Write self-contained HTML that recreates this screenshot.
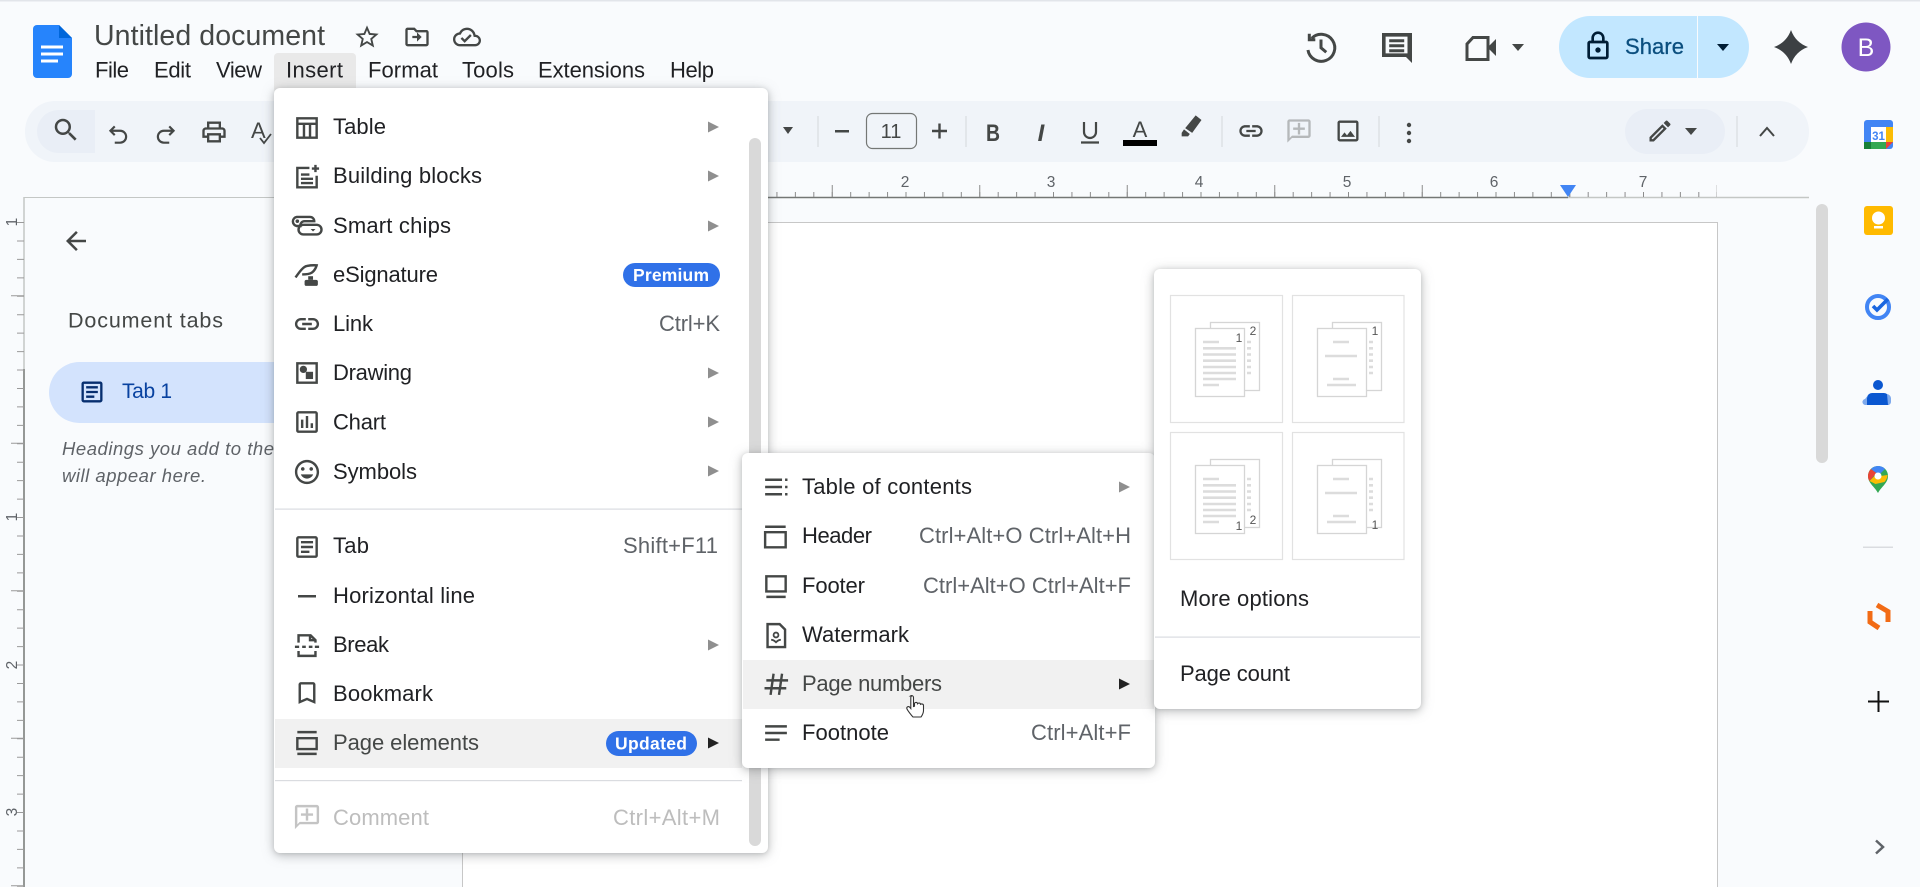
<!DOCTYPE html>
<html lang="en"><head><meta charset="utf-8"><title>Untitled document</title>
<style>
html,body{margin:0;padding:0;background:#f9fbfd;width:1920px;height:887px;overflow:hidden}
svg.r{display:block;position:absolute;left:0;top:0}
text{font-family:"Liberation Sans",sans-serif;white-space:pre}
.m{font-size:22px;fill:#202124}
.k{font-size:22px;fill:#5f6368}
.d{font-size:22px;fill:#bdbdbd}
.h{font-size:22px;fill:#202124}
.n{font-size:15.500px;fill:#5f6368;text-anchor:middle}
.b{font-size:17.500px;font-weight:700;fill:#fff}
.g{fill:#444746}
.s{fill:none;stroke:#444746;stroke-width:2}
.shadow{filter:drop-shadow(0 2px 6px rgba(60,64,67,.28)) drop-shadow(0 1px 2px rgba(60,64,67,.2))}
</style></head><body>
<svg class="r" width="1920" height="887" viewBox="0 0 1920 887" xmlns="http://www.w3.org/2000/svg">
<defs>
<g id="pgs">
<rect x="1210.5" y="322.5" width="49" height="68" fill="#fff" stroke="#d5d5d5" stroke-width="1.3"/>
<rect x="1195.5" y="328.5" width="49" height="68" fill="#fff" stroke="#d5d5d5" stroke-width="1.3"/>
<path d="M1247 342h4M1247 348.300h4M1247 354.500h4M1247 360.700h4M1247 367h4M1247 373h4" stroke="#dcdcdc" stroke-width="2.600"/>
</g>
<path id="l1" d="M1203 342h16M1203 348.300h33M1203 354.500h33M1203 360.700h33M1203 367h33M1203 373h33M1203 379h33M1203 385h16" stroke="#dcdcdc" stroke-width="2.600"/>
<path id="l2" d="M1333 342h16M1325 356h32M1333 379h16M1327 385h29" stroke="#dcdcdc" stroke-width="2.600"/>
</defs>

<rect width="1920" height="887" fill="#f9fbfd"/>
<rect width="1920" height="1.500" fill="#e2e5ea"/>

<!-- page -->
<rect x="462.500" y="222.500" width="1255" height="700" fill="#fff" stroke="#c7c7c7"/>
<!-- rulers -->
<line x1="24" y1="197.500" x2="1568" y2="197.500" stroke="#c4c7c5"/>
<line x1="760" y1="197.500" x2="1568" y2="197.500" stroke="#747775" stroke-width="1.500"/>
<line x1="1568" y1="197.500" x2="1809" y2="197.500" stroke="#c4c7c5" stroke-width="1.500"/>
<line x1="758" y1="194.500" x2="1717" y2="194.500" stroke="#8c8c8c" stroke-width="5" stroke-dasharray="1 17.4375"/>
<line x1="831.750" y1="191" x2="1717" y2="191" stroke="#8c8c8c" stroke-width="12" stroke-dasharray="1 146.500"/>
<text class="n" x="905" y="187">2</text><text class="n" x="1051" y="187">3</text><text class="n" x="1199" y="187">4</text><text class="n" x="1347" y="187">5</text><text class="n" x="1494" y="187">6</text><text class="n" x="1643" y="187">7</text>
<polygon points="1560,185 1576,185 1568,197" fill="#4285f4"/>
<line x1="24" y1="197" x2="24" y2="369" stroke="#c4c7c5" stroke-width="1.500"/>
<line x1="24" y1="369" x2="24" y2="887" stroke="#747775" stroke-width="1.500"/>
<line x1="20.500" y1="222" x2="20.500" y2="887" stroke="#9a9a9a" stroke-width="7" stroke-dasharray="1 17.4375"/>
<line x1="17.500" y1="295.250" x2="17.500" y2="887" stroke="#9a9a9a" stroke-width="13" stroke-dasharray="1 146.500"/>
<g class="n"><text class="n" transform="translate(12 222) rotate(-90)" y="5">1</text><text class="n" transform="translate(12 517) rotate(-90)" y="5">1</text><text class="n" transform="translate(12 665) rotate(-90)" y="5">2</text><text class="n" transform="translate(12 812) rotate(-90)" y="5">3</text></g>

<!-- sidebar -->
<svg x="61" y="226" width="30" height="30" viewBox="0 0 24 24"><path class="g" d="M20 11H7.830l5.590-5.590L12 4l-8 8 8 8 1.410-1.410L7.830 13H20v-2z"/></svg>
<text x="68" y="327.500" font-size="21.500" fill="#444746" textLength="155" lengthAdjust="spacing">Document tabs</text>
<rect x="49" y="362" width="300" height="61" rx="30.500" fill="#d3e3fd"/>
<svg x="78" y="378" width="28" height="28" viewBox="0 0 24 24"><path fill="#062e6f" d="M19 5v14H5V5h14m0-2H5c-1.100 0-2 .9-2 2v14c0 1.100.9 2 2 2h14c1.100 0 2-.9 2-2V5c0-1.100-.9-2-2-2z M14 17H7v-2h7v2zm3-4H7v-2h10v2zm0-4H7V7h10v2z"/></svg>
<text x="122" y="398" font-size="21" fill="#0842a0" textLength="50" lengthAdjust="spacing">Tab 1</text>
<text x="62" y="455" font-size="18.500" font-style="italic" fill="#5f6368" textLength="212" lengthAdjust="spacing">Headings you add to the</text>
<text x="62" y="482" font-size="18.500" font-style="italic" fill="#5f6368" textLength="144" lengthAdjust="spacing">will appear here.</text>

<!-- toolbar -->
<rect x="25" y="101" width="1784" height="61" rx="30" fill="#f0f4f9"/>
<path d="M58 110H95V153H58A21.500 21.500 0 0 1 37 131.500A21.500 21.500 0 0 1 58 110Z" fill="#e9eef6"/>
<svg x="51" y="115" width="30" height="30" viewBox="0 0 24 24"><path class="g" d="M15.500 14h-.79l-.28-.27A6.471 6.471 0 0 0 16 9.500 6.500 6.500 0 1 0 9.500 16c1.610 0 3.090-.59 4.230-1.570l.27.28v.79l5 4.990L20.490 19l-4.990-5zm-6 0C7.010 14 5 11.990 5 9.500S7.010 5 9.500 5 14 7.010 14 9.500 11.990 14 9.500 14z"/></svg>
<svg x="105" y="121" width="26" height="26" viewBox="0 0 24 24"><path class="s" d="M9 5L5 9l4 4M5 9h9a5.500 5.500 0 0 1 0 11H9"/></svg>
<svg x="153" y="121" width="26" height="26" viewBox="0 0 24 24"><path class="s" d="M15 5l4 4-4 4M19 9h-9a5.500 5.500 0 0 0 0 11h5"/></svg>
<svg x="200" y="118" width="28" height="28" viewBox="0 0 24 24"><path class="g" d="M19 8h-1V3H6v5H5c-1.660 0-3 1.340-3 3v6h4v4h12v-4h4v-6c0-1.660-1.340-3-3-3zM8 5h8v3H8V5zm8 12v2H8v-4h8v2zm2-2v-2H6v2H4v-4c0-.55.45-1 1-1h14c.55 0 1 .45 1 1v4h-2z"/></svg>
<text x="251" y="138" font-size="22" fill="#444746">A</text>
<path d="M260 138l4 5 7-9" fill="none" stroke="#444746" stroke-width="1.800"/>
<polygon points="783,127 793,127 788,134" fill="#444746"/>
<g stroke="#d5d8dc"><line x1="818" y1="116" x2="818" y2="147"/><line x1="966" y1="116" x2="966" y2="147"/><line x1="1222" y1="116" x2="1222" y2="147"/><line x1="1379" y1="116" x2="1379" y2="147"/><line x1="1737" y1="116" x2="1737" y2="147"/></g>
<rect x="835" y="130" width="14" height="2.500" fill="#444746"/>
<rect x="866.500" y="113.500" width="50" height="35" rx="6" fill="none" stroke="#747775" stroke-width="1.200"/>
<text x="891" y="138" font-size="20" fill="#444746" text-anchor="middle">11</text>
<path d="M932 131h15M939.500 123.500v15" stroke="#444746" stroke-width="2.400"/>
<text x="993" y="141" font-size="24" font-weight="700" fill="#444746" text-anchor="middle" textLength="14" lengthAdjust="spacingAndGlyphs">B</text>
<text x="1041" y="141" font-size="24" font-weight="700" font-style="italic" fill="#444746" text-anchor="middle" font-family="Liberation Serif">I</text>
<path d="M1084 122v10a6 6 0 0 0 12 0v-10M1081 142.500h18" fill="none" stroke="#444746" stroke-width="2.200"/>
<text x="1140" y="137" font-size="22" fill="#444746" text-anchor="middle">A</text>
<rect x="1123" y="140" width="34" height="6" fill="#000"/>
<svg x="1177" y="112" width="28" height="30" viewBox="0 0 24 24"><path class="g" d="M16 2l5 4-8 11-6-4zM6 14l5 4-1.500 2H4v-3z"/></svg>
<svg x="1237" y="117" width="28" height="28" viewBox="0 0 24 24"><path class="g" d="M17 7h-4v2h4c1.650 0 3 1.350 3 3s-1.350 3-3 3h-4v2h4c2.760 0 5-2.240 5-5s-2.240-5-5-5zm-6 8H7c-1.650 0-3-1.350-3-3s1.350-3 3-3h4V7H7c-2.760 0-5 2.240-5 5s2.240 5 5 5h4v-2zm-3-4h8v2H8z"/></svg>
<svg x="1285" y="117" width="28" height="28" viewBox="0 0 24 24"><path fill="#b5b8ba" d="M20 2H4c-1.100 0-2 .9-2 2v18l4-4h14c1.100 0 2-.9 2-2V4c0-1.100-.9-2-2-2zm0 14H6l-2 2V4h16v12zM13 5h-2v4H7v2h4v4h2v-4h4V9h-4z"/></svg>
<svg x="1334" y="117" width="28" height="28" viewBox="0 0 24 24"><path class="g" d="M19 5v14H5V5h14m0-2H5c-1.100 0-2 .9-2 2v14c0 1.100.9 2 2 2h14c1.100 0 2-.9 2-2V5c0-1.100-.9-2-2-2zm-4.860 8.860l-3 3.870L9 13.140 6 17h12l-3.860-5.140z"/></svg>
<g fill="#444746"><circle cx="1409" cy="125" r="2.200"/><circle cx="1409" cy="133" r="2.200"/><circle cx="1409" cy="141" r="2.200"/></g>
<rect x="1625" y="109" width="100" height="45" rx="22.500" fill="#e9eef6"/>
<svg x="1646" y="117" width="28" height="28" viewBox="0 0 24 24"><path class="g" d="M14.060 9.020l.92.92L5.920 19H5v-.92l9.060-9.060M17.660 3c-.25 0-.51.1-.7.29l-1.830 1.830 3.750 3.750 1.830-1.830c.39-.39.39-1.020 0-1.410l-2.340-2.340c-.2-.2-.45-.29-.71-.29zm-3.600 3.190L3 17.250V21h3.750L17.810 9.940l-3.750-3.750z"/></svg>
<polygon points="1685,128 1697,128 1691,135" fill="#444746"/>
<path d="M1760 136l7-8 7 8" fill="none" stroke="#444746" stroke-width="2"/>

<!-- header -->
<path d="M37 25H59L72 38V74a4 4 0 0 1-4 4H37a4 4 0 0 1-4-4V29a4 4 0 0 1 4-4Z" fill="#2684fc"/>
<path d="M59 25L72 38H59Z" fill="#0066da"/>
<path d="M41 47h22M41 54h22M41 61h17" stroke="#fff" stroke-width="3"/>
<text x="94" y="45" font-size="28.500" fill="#444746" textLength="231" lengthAdjust="spacing">Untitled document</text>
<svg x="353" y="23" width="28" height="28" viewBox="0 0 24 24"><path class="g" d="M22 9.240l-7.190-.62L12 2 9.190 8.630 2 9.240l5.460 4.730L5.820 21 12 17.270 18.180 21l-1.630-7.030L22 9.240zM12 15.400l-3.760 2.270 1-4.280-3.320-2.880 4.380-.38L12 6.100l1.710 4.040 4.380.38-3.320 2.880 1 4.280L12 15.400z"/></svg>
<svg x="403" y="23" width="28" height="28" viewBox="0 0 24 24"><path class="g" d="M20 6h-8l-2-2H4c-1.100 0-2 .9-2 2v12c0 1.100.9 2 2 2h16c1.100 0 2-.9 2-2V8c0-1.100-.9-2-2-2zm0 12H4V6h5.170l2 2H20v10zm-8-2l4-4-4-4v3H8v2h4v3z"/></svg>
<svg x="452" y="23" width="30" height="28" viewBox="0 0 24 24"><path class="g" d="M19.350 10.040A7.490 7.490 0 0 0 12 4C9.110 4 6.600 5.640 5.350 8.040A5.994 5.994 0 0 0 0 14c0 3.310 2.690 6 6 6h13c2.760 0 5-2.240 5-5 0-2.640-2.050-4.780-4.650-4.960zM19 18H6c-2.210 0-4-1.790-4-4 0-2.050 1.530-3.760 3.560-3.970l1.070-.11.5-.95A5.469 5.469 0 0 1 12 6c2.620 0 4.880 1.860 5.390 4.430l.3 1.500 1.530.11c1.560.1 2.780 1.410 2.780 2.960 0 1.650-1.350 3-3 3zm-9-3.820l-2.090-2.090L6.500 13.500 10 17l6.010-6.010-1.410-1.410z"/></svg>
<rect x="274" y="53" width="82" height="40" rx="4" fill="#e9e9e9"/>
<g class="h">
<text class="h" x="95" y="77.500" textLength="34" lengthAdjust="spacing">File</text>
<text class="h" x="154" y="77.500" textLength="37" lengthAdjust="spacing">Edit</text>
<text class="h" x="216" y="77.500" textLength="46" lengthAdjust="spacing">View</text>
<text class="h" x="286" y="77.500" textLength="57" lengthAdjust="spacing">Insert</text>
<text class="h" x="368" y="77.500" textLength="70" lengthAdjust="spacing">Format</text>
<text class="h" x="462" y="77.500" textLength="52" lengthAdjust="spacing">Tools</text>
<text class="h" x="538" y="77.500" textLength="107" lengthAdjust="spacing">Extensions</text>
<text class="h" x="670" y="77.500" textLength="44" lengthAdjust="spacing">Help</text>
</g>
<svg x="1303" y="29" width="36" height="36" viewBox="0 0 24 24"><path class="s" stroke-width="2.200" d="M5.800 6.200A9 9 0 1 1 3.300 14M4.200 3.200v4h4M12 7v5.500l3.500 3"/></svg>
<svg x="1379" y="29" width="36" height="38" viewBox="0 0 24 24"><path class="g" d="M2 2h20v20l-4-4H2zm2.400 2.400v11.200h14.600V4.400zm2.400 1.800h10v2H6.800zm0 3.300h10v2H6.800zm0 3.300h10v2H6.800z"/></svg>
<path d="M1473 37.500h15v22h-21V44Z" fill="none" stroke="#444746" stroke-width="3"/><path d="M1488 47l8-8v17l-8-8Z" fill="#444746"/>
<polygon points="1512,44 1524,44 1518,51" fill="#444746"/>
<path d="M1590 16H1697V78H1590A31 31 0 0 1 1559 47A31 31 0 0 1 1590 16Z" fill="#c2e7ff"/>
<path d="M1698 16H1718A31 31 0 0 1 1749 47A31 31 0 0 1 1718 78H1698Z" fill="#c2e7ff"/>
<svg x="1582" y="30" width="32" height="32" viewBox="0 0 24 24"><path fill="#001d35" d="M18 8h-1V6c0-2.760-2.240-5-5-5S7 3.240 7 6v2H6c-1.100 0-2 .9-2 2v10c0 1.100.9 2 2 2h12c1.100 0 2-.9 2-2V10c0-1.100-.9-2-2-2zM9 6c0-1.660 1.340-3 3-3s3 1.340 3 3v2H9V6zm9 14H6V10h12v10zm-6-3c1.100 0 2-.9 2-2s-.9-2-2-2-2 .9-2 2 .9 2 2 2z"/></svg>
<text x="1625" y="54" font-size="22" fill="#0b4f7f" textLength="59" lengthAdjust="spacing" stroke="#0b4f7f" stroke-width=".3">Share</text>
<polygon points="1717,44 1729,44 1723,51" fill="#001d35"/>
<path d="M1791 30Q1795.500 42.500 1808 47Q1795.500 51.500 1791 64Q1786.500 51.500 1774 47Q1786.500 42.500 1791 30Z" fill="#3c4043"/>
<circle cx="1866" cy="47" r="24.500" fill="#7e57c2"/>
<text x="1866" y="56" font-size="25" fill="#fff" text-anchor="middle">B</text>

<!-- doc scrollbar -->
<rect x="1816" y="204" width="12" height="259" rx="6" fill="#d9d9d9"/>

<!-- side icons -->
<rect x="1864" y="120" width="29" height="29" rx="3" fill="#4285f4"/>
<rect x="1886" y="127" width="7" height="15" fill="#fbbc04"/>
<rect x="1871" y="142" width="15" height="7" fill="#34a853"/>
<rect x="1864" y="142" width="7" height="7" fill="#188038"/>
<polygon points="1886,142 1893,142 1886,149" fill="#ea4335"/>
<rect x="1871" y="127" width="15" height="15" fill="#fff"/>
<text x="1878.500" y="140" font-size="11.500" font-weight="700" fill="#4285f4" text-anchor="middle">31</text>
<rect x="1864" y="206" width="29" height="29" rx="3" fill="#ffba00"/>
<circle cx="1878.500" cy="218" r="6.500" fill="#fff"/><rect x="1874" y="226" width="9" height="2.500" fill="#fff"/>
<circle cx="1878" cy="307" r="11" fill="none" stroke="#4285f4" stroke-width="4"/>
<path d="M1873 306l4 4 11-11" fill="none" stroke="#1a66e0" stroke-width="3.600"/>
<circle cx="1878" cy="385" r="5" fill="#0b57d0"/>
<path d="M1872 393h12a5 5 0 0 1 5 5v7h-22v-7a5 5 0 0 1 5-5Z" fill="#0b57d0"/>
<path d="M1869 394a5 5 0 0 0-2 4v7h-1a3 3 0 0 1-1-6ZM1887 394a5 5 0 0 1 4 4v4a3 3 0 0 1-3 3Z" fill="#7ea9ec"/>
<path d="M1878 466a10 10 0 0 1 10 10c0 7-6 10-10 17c-4-7-10-10-10-17a10 10 0 0 1 10-10Z" fill="#34a853"/>
<path d="M1871 469a10 10 0 0 0-3 7c0 2 .5 3.500 1.500 5l7-8Z" fill="#ea4335"/>
<path d="M1871 469a10 10 0 0 1 7-3c3 0 5.500 1.200 7 3l-6 6Z" fill="#4285f4"/>
<path d="M1869.500 481l7-7 4 2 7-1c0 3-1.500 5-3 7l-9 2Z" fill="#fbbc04"/>
<circle cx="1878" cy="476" r="3.500" fill="#fff"/>
<rect x="1863" y="546.500" width="30" height="1.500" fill="#dadce0"/>
<path d="M1877 605l11 6.500v10.500M1870 611v11l9 6" fill="none" stroke="#f26b15" stroke-width="5"/>
<path d="M1868 701.500h21M1878.500 691v21" stroke="#111" stroke-width="2"/>
<path d="M1876 840.500l7 6.500-7 6.500" fill="none" stroke="#5f6368" stroke-width="2.500"/>

<!-- MAIN MENU -->
<rect class="shadow" x="274" y="88" width="494" height="765" rx="6" fill="#fff"/>
<rect x="749" y="138" width="12" height="708" rx="6" fill="#d9d9d9"/>
<rect x="275" y="719" width="467" height="49" fill="#f1f1f1"/>
<rect x="275" y="508.500" width="467" height="1.200" fill="#dadce0"/>
<rect x="275" y="780" width="467" height="1.200" fill="#dadce0"/>

<text class="m" x="333" y="134" textLength="53" lengthAdjust="spacing">Table</text>
<text class="m" x="333" y="183" textLength="149" lengthAdjust="spacing">Building blocks</text>
<text class="m" x="333" y="233" textLength="118" lengthAdjust="spacing">Smart chips</text>
<text class="m" x="333" y="282" textLength="105" lengthAdjust="spacing">eSignature</text>
<text class="m" x="333" y="331" textLength="40" lengthAdjust="spacing">Link</text>
<text class="m" x="333" y="380" textLength="79" lengthAdjust="spacing">Drawing</text>
<text class="m" x="333" y="429.500" textLength="53" lengthAdjust="spacing">Chart</text>
<text class="m" x="333" y="479" textLength="84" lengthAdjust="spacing">Symbols</text>
<text class="m" x="333" y="553" textLength="36" lengthAdjust="spacing">Tab</text>
<text class="m" x="333" y="603" textLength="142" lengthAdjust="spacing">Horizontal line</text>
<text class="m" x="333" y="652" textLength="56" lengthAdjust="spacing">Break</text>
<text class="m" x="333" y="701" textLength="100" lengthAdjust="spacing">Bookmark</text>
<text class="m" x="333" y="750" textLength="146" lengthAdjust="spacing" style="fill:#444746">Page elements</text>
<text class="d" x="333" y="825" textLength="96" lengthAdjust="spacing">Comment</text>
<text class="k" x="659" y="331" textLength="61" lengthAdjust="spacing">Ctrl+K</text>
<text class="k" x="623" y="553" textLength="95" lengthAdjust="spacing">Shift+F11</text>
<text class="d" x="613" y="825" textLength="107" lengthAdjust="spacing">Ctrl+Alt+M</text>
<rect x="623" y="263" width="97" height="24" rx="12" fill="#3071e8"/>
<text class="b" x="633" y="281" textLength="76" lengthAdjust="spacing">Premium</text>
<rect x="606" y="731" width="91" height="25" rx="12.500" fill="#3071e8"/>
<text class="b" x="615" y="749.500" textLength="72" lengthAdjust="spacing">Updated</text>
<g fill="#8f8f8f">
<polygon points="708,121.500 719,127 708,132.500"/><polygon points="708,170.500 719,176 708,181.500"/><polygon points="708,220.500 719,226 708,231.500"/><polygon points="708,367.500 719,373 708,378.500"/><polygon points="708,416.500 719,422 708,427.500"/><polygon points="708,465.500 719,471 708,476.500"/><polygon points="708,639.500 719,645 708,650.500"/>
</g>
<polygon points="708,737.500 719,743 708,748.500" fill="#222"/>

<!-- main menu icons -->
<svg x="292.500" y="113.500" width="29" height="29" viewBox="0 0 24 24"><path class="s" d="M4 4h16v16H4zM4 8.500h16M9.500 8.500V20M14.500 8.500V20"/></svg>
<svg x="292.500" y="162.500" width="29" height="29" viewBox="0 0 24 24"><path class="s" d="M14 4.500H4v16h16V11M7 10h7M7 13.500h10M7 17h10M19 2v6M16 5h6"/></svg>
<svg x="291" y="211.500" width="32" height="29" viewBox="0 0 26 24"><path class="s" d="M4.500 4.500h11a3.500 3.500 0 0 1 3.500 3.500H11a3.500 3.500 0 0 0-3.500 4H4.500a3.800 3.800 0 0 1 0-7.500ZM10 11h11a3.500 3.500 0 0 1 0 8H10a4 4 0 0 1 0-8Z"/><circle cx="5" cy="8" r="1.500" fill="#444746"/><path d="M16 14.500h4l-2 2z" fill="#444746"/></svg>
<svg x="292.500" y="260.500" width="29" height="29" viewBox="0 0 24 24"><path class="s" d="M2.500 14C6 9 9 5 12 4.500c4-.8 8-.5 8-.5s-1 4-4 6c-2 1.300-6 1.500-8 1.500"/><rect x="13" y="13" width="4" height="3" fill="#444746"/><rect x="10" y="16" width="11" height="5" rx="1.500" fill="#444746"/></svg>
<svg x="292.500" y="309.500" width="29" height="29" viewBox="0 0 24 24"><path class="g" d="M17 7h-4v2h4c1.650 0 3 1.350 3 3s-1.350 3-3 3h-4v2h4c2.760 0 5-2.240 5-5s-2.240-5-5-5zm-6 8H7c-1.650 0-3-1.350-3-3s1.350-3 3-3h4V7H7c-2.760 0-5 2.240-5 5s2.240 5 5 5h4v-2zm-3-4h8v2H8z"/></svg>
<svg x="292.500" y="358.500" width="29" height="29" viewBox="0 0 24 24"><path class="s" d="M4 4h16v16H4z"/><circle cx="9" cy="9" r="3" fill="#444746"/><rect x="11" y="11" width="6" height="6" fill="#444746"/></svg>
<svg x="292.500" y="407.500" width="29" height="29" viewBox="0 0 24 24"><path class="g" d="M19 3H5c-1.100 0-2 .9-2 2v14c0 1.100.9 2 2 2h14c1.100 0 2-.9 2-2V5c0-1.100-.9-2-2-2zm0 16H5V5h14v14zM7 10h2v7H7zm4-3h2v10h-2zm4 6h2v4h-2z"/></svg>
<svg x="292.500" y="457.500" width="29" height="29" viewBox="0 0 24 24"><path class="g" d="M11.990 2C6.470 2 2 6.480 2 12s4.470 10 9.990 10C17.520 22 22 17.520 22 12S17.520 2 11.990 2zM12 20c-4.420 0-8-3.580-8-8s3.580-8 8-8 8 3.580 8 8-3.580 8-8 8zm3.500-9c.83 0 1.500-.67 1.500-1.500S16.330 8 15.500 8 14 8.670 14 9.500s.67 1.500 1.500 1.500zm-7 0c.83 0 1.500-.67 1.500-1.500S9.330 8 8.500 8 7 8.670 7 9.500 7.670 11 8.500 11zm3.500 6.500c2.330 0 4.310-1.460 5.110-3.500H6.890c.8 2.040 2.780 3.500 5.110 3.500z"/></svg>
<svg x="292.500" y="532.500" width="29" height="29" viewBox="0 0 24 24"><path class="g" d="M19 5v14H5V5h14m0-2H5c-1.100 0-2 .9-2 2v14c0 1.100.9 2 2 2h14c1.100 0 2-.9 2-2V5c0-1.100-.9-2-2-2z M14 17H7v-2h7v2zm3-4H7v-2h10v2zm0-4H7V7h10v2z"/></svg>
<rect x="298" y="595" width="18" height="2.500" fill="#444746"/>
<svg x="292.500" y="630.500" width="29" height="29" viewBox="0 0 24 24"><path class="s" d="M5 10V4h10l4 4v2M14.500 4v4H19M5 17v4h14v-4M2 13.500h3.500M8 13.500h3M13.500 13.500h3M18.500 13.500h3.500"/></svg>
<svg x="292.500" y="678.500" width="29" height="29" viewBox="0 0 24 24"><path class="g" d="M17 3H7c-1.100 0-2 .9-2 2v16l7-3 7 3V5c0-1.100-.9-2-2-2zm0 15l-5-2.180L7 18V5h10v13z"/></svg>
<svg x="292.500" y="728.500" width="29" height="29" viewBox="0 0 24 24"><path class="s" d="M4 3h16M4 8h16v9H4zM4 21h16"/></svg>
<svg x="292.500" y="802.500" width="29" height="29" viewBox="0 0 24 24"><path fill="#c4c4c4" d="M20 2H4c-1.100 0-2 .9-2 2v18l4-4h14c1.100 0 2-.9 2-2V4c0-1.100-.9-2-2-2zm0 14H6l-2 2V4h16v12zM13 5h-2v4H7v2h4v4h2v-4h4V9h-4z"/></svg>

<!-- SUB MENU -->
<rect class="shadow" x="742" y="453" width="413" height="315" rx="6" fill="#fff"/>
<rect x="743" y="660" width="411" height="49" fill="#f1f1f1"/>
<text class="m" x="802" y="494" textLength="170" lengthAdjust="spacing">Table of contents</text>
<text class="m" x="802" y="543" textLength="70" lengthAdjust="spacing">Header</text>
<text class="m" x="802" y="593" textLength="63" lengthAdjust="spacing">Footer</text>
<text class="m" x="802" y="642" textLength="107" lengthAdjust="spacing">Watermark</text>
<text class="m" x="802" y="691" textLength="140" lengthAdjust="spacing" style="fill:#444746">Page numbers</text>
<text class="m" x="802" y="740" textLength="87" lengthAdjust="spacing">Footnote</text>
<text class="k" x="919" y="543" textLength="212" lengthAdjust="spacing">Ctrl+Alt+O Ctrl+Alt+H</text>
<text class="k" x="923" y="593" textLength="208" lengthAdjust="spacing">Ctrl+Alt+O Ctrl+Alt+F</text>
<text class="k" x="1031" y="740" textLength="100" lengthAdjust="spacing">Ctrl+Alt+F</text>
<polygon points="1119,481.500 1130,487 1119,492.500" fill="#8f8f8f"/>
<polygon points="1119,678.500 1130,684 1119,689.500" fill="#222"/>
<svg x="761.500" y="472.500" width="29" height="29" viewBox="0 0 24 24"><path class="s" d="M3 6h14M3 12h14M3 18h14M20.500 5v2M20.500 11v2M20.500 17v2"/></svg>
<svg x="761.500" y="522.500" width="29" height="29" viewBox="0 0 24 24"><path class="s" d="M3 3.500h17M3 8h17v12.500H3z"/></svg>
<svg x="761.500" y="571.500" width="29" height="29" viewBox="0 0 24 24"><path class="s" d="M4 4h16v12.500H4zM4 21h16"/></svg>
<svg x="761.500" y="620.500" width="29" height="29" viewBox="0 0 24 24"><path class="s" d="M5 3h10l4.500 4.500V22H5z"/><circle cx="12" cy="12" r="2" fill="none" stroke="#444746" stroke-width="1.500"/><path d="M8 16c2 0 3 1 4 2 1-1 2-2 4-2" fill="none" stroke="#444746" stroke-width="1.500"/></svg>
<svg x="761.500" y="669.500" width="29" height="29" viewBox="0 0 24 24"><path class="s" d="M10 3.500L7.500 21M17 3.500L14.500 21M4 9h18M2.500 15.500h18"/></svg>
<svg x="761.500" y="718.500" width="29" height="29" viewBox="0 0 24 24"><path class="s" d="M3 6.500h18M3 12h18M3 17.500h12"/></svg>
<path d="M910.500 696c1.500-1 3 0 3 1.500v9l1-.3v-3c1-1.200 3-1 3 .5 1-1 3-.8 3 .6 1-.6 3-.4 3 1.200v5c0 3-1.500 5-2.500 6.500h-8c-1.500-1.500-5-6-6-8-.8-1.800 1-3 2.500-2l1.300 1.500v-11c0-.6 0-1 .7-1.500Z" fill="#fff" stroke="#333" stroke-width="1.100"/>

<!-- THIRD MENU -->
<rect class="shadow" x="1154" y="269" width="267" height="440" rx="6" fill="#fff"/>
<g fill="none" stroke="#e2e2e2" stroke-width="1.200">
<rect x="1170.500" y="295.500" width="112" height="127"/><rect x="1292.500" y="295.500" width="111.500" height="127"/>
<rect x="1170.500" y="432.500" width="112" height="127"/><rect x="1292.500" y="432.500" width="111.500" height="127"/>
</g>
<use href="#pgs"/><use href="#pgs" x="122"/><use href="#pgs" y="137"/><use href="#pgs" x="122" y="137"/>
<use href="#l1"/><use href="#l1" y="137"/><use href="#l2"/><use href="#l2" y="137"/>
<g font-size="12" fill="#555" text-anchor="middle">
<text x="1239" y="342">1</text><text x="1253" y="335">2</text><text x="1375" y="335">1</text>
<text x="1239" y="530">1</text><text x="1253" y="524">2</text><text x="1375" y="529">1</text>
</g>
<text class="m" x="1180" y="606" textLength="129" lengthAdjust="spacing">More options</text>
<rect x="1155" y="636.500" width="265" height="1.200" fill="#dadce0"/>
<text class="m" x="1180" y="681" textLength="110" lengthAdjust="spacing">Page count</text>
</svg>
</body></html>
